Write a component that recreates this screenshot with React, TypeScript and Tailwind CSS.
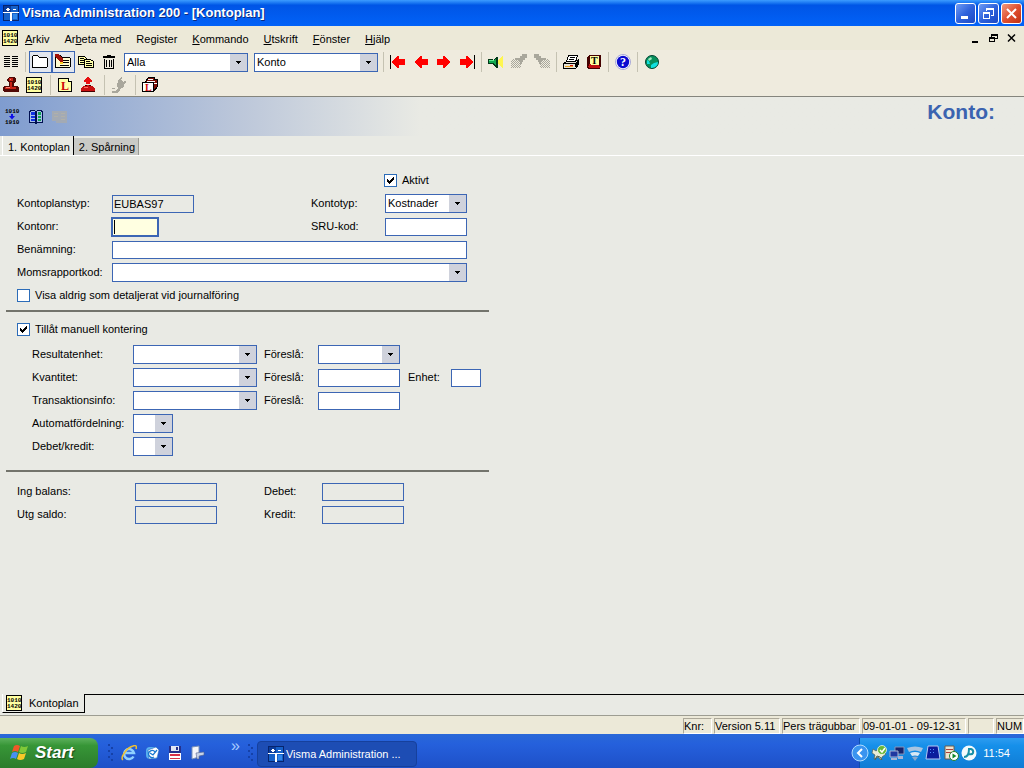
import { ReactNode } from 'react';
import clsx from 'clsx';

interface IFieldProps {
  id: string;
  label: string;
  className?: string;
}

interface ISelectBoxProps {
  id: string;
  label?: string;
  className?: string;
  options?: string[];
}

const Icon = ({ children, size = 16 }: { children: ReactNode; size?: number }) => (
  <svg width={size} height={size} viewBox="0 0 16 16" shapeRendering="crispEdges" className="shrink-0" aria-hidden>
    {children}
  </svg>
);

const VismaIcon = () => (
  <Icon>
    <rect width="16" height="16" fill="#06246e" />
    <rect x="1" y="1" width="14" height="14" fill="#1560c8" />
    <rect x="1" y="1" width="7" height="7" fill="#0a3c9c" />
    <path d="M0 7h16v1H0zM7 8h2v8H7zM3 4h4v1H3zM4 3h2v3H4zM10 4h3v1h-3z" fill="#fff" />
    <path d="M10 9h4v5h-4z" fill="#2f86ea" />
  </Icon>
);

const DigitsIcon = ({ bare }: { bare?: boolean }) => (
  <svg width="16" height="16" viewBox="0 0 16 16" className="shrink-0 overflow-visible" aria-hidden>
    {!bare && <rect x="0.5" y="0.5" width="15" height="15" fill="#ffffa0" stroke="#000" />}
    <g fontFamily="Liberation Mono" fontWeight="700" fontSize="6" fill="#000">
      <text x="1" y={bare ? 4 : 7}>
        1010
      </text>
      <text x="1" y={bare ? 15 : 13}>
        {bare ? '1910' : '1420'}
      </text>
    </g>
    {bare && <path d="M7 5h2v2h2L8 10.500 5 7h2z" fill="#1010e8" />}
  </svg>
);

const ListIcon = () => (
  <Icon>
    <path d="M1 2h6v1H1zM1 4h6v1H1zM1 6h6v1H1zM1 8h6v1H1zM1 10h6v1H1zM1 12h6v1H1zM9 2h6v1H9zM9 4h6v1H9zM9 6h6v1H9zM9 8h6v1H9zM9 10h6v1H9zM9 12h6v1H9z" />
  </Icon>
);

const FolderIcon = () => (
  <Icon>
    <path d="M.5 13.500v-11l1-1h4l2 2h7l1 1v8l-1 1z" fill="#fff" stroke="#000" />
  </Icon>
);

const FolderEditIcon = () => (
  <Icon>
    <path d="M.5 13.500v-11l1-1h4l2 2h7l1 1v8l-1 1z" fill="#fffbd0" stroke="#000" />
    <path d="M8 6h6v1H8zM8 8h6v1H8zM5 11h9v1H5z" />
    <path d="M0 0h3l5 5v3H5L0 3z" fill="#a01008" />
    <path d="M5 8h3v2H5z" fill="#ffcf20" />
  </Icon>
);

const CopyIcon = () => (
  <Icon>
    <path d="M.5 2.500h6l2 2v6h-8z" fill="#ffffa8" stroke="#000" />
    <path d="M2 4h4v1H2zM2 6h4v1H2zM2 8h4v1H2z" />
    <path d="M6.500 5.500h6l3 2v6h-9z" fill="#ffffa8" stroke="#000" />
    <path d="M8 7h4v1H8zM8 9h6v1H8zM8 11h6v1H8z" />
  </Icon>
);

const TrashIcon = () => (
  <Icon>
    <path d="M6 1h4v1H6zM2 2h12v2H2zM3 5h1v10H3zM12 5h1v10h-1zM4 14h8v1H4zM5 6h1v7H5zM7.500 6h1v7h-1zM10 6h1v7h-1z" />
  </Icon>
);

const ArrowIcon = ({ right, stop }: { right?: boolean; stop?: boolean }) => (
  <Icon>
    <g transform={right ? 'translate(16 0) scale(-1 1)' : undefined}>
      {stop && <rect x="0" y="1" width="1" height="14" />}
      <path d="M2 7h1V6h1V5h1V4h1V3h1V2h2v3h6v6H9v3H7v-1H6v-1H5v-1H4v-1H3V9H2z" fill="#f00" />
    </g>
  </Icon>
);

const SpeakerIcon = () => (
  <Icon>
    <path d="M9 7l6-6v14L9 9z" fill="#fff650" />
    <path d="M0 5h5v1h1V5h1V4h1V3h2v11H8v-1H7v-1H6v-1H5v-1H0z" fill="#023818" />
    <path d="M1 6h5v3H1zM6 6h1V5h1v6H7v-1H6z" fill="#10a850" />
    <path d="M1 6h5v1H1z" fill="#60e890" />
  </Icon>
);

const TorchIcon = ({ flip }: { flip?: boolean }) => (
  <Icon>
    <g transform={flip ? 'translate(16 0) scale(-1 1)' : undefined} fill="#a9a79c">
      <path d="M11 0h5v4h-2v2h-2v2h-1v2H9V8H8V7H7V6H4V4h5V2h2z" />
      <path d="M2 5h1v1H2zM4 5h1v1H4zM1 6h1v1H1zM3 6h1v1H3zM5 6h1v1H5zM0 7h1v1H0zM2 7h1v1H2zM4 7h1v1H4zM6 7h1v1H6zM1 8h1v1H1zM3 8h1v1H3zM5 8h1v1H5zM7 8h1v1H7zM0 9h1v1H0zM2 9h1v1H2zM4 9h1v1H4zM6 9h1v1H6zM8 9h1v1H8zM1 10h1v1H1zM3 10h1v1H3zM5 10h1v1H5zM7 10h1v1H7zM9 10h1v1H9zM0 11h1v1H0zM2 11h1v1H2zM4 11h1v1H4zM6 11h1v1H6zM8 11h1v1H8zM1 12h1v1H1zM3 12h1v1H3zM5 12h1v1H5zM7 12h1v1H7zM9 12h1v1H9zM0 13h1v1H0zM2 13h1v1H2zM4 13h1v1H4zM6 13h1v1H6zM8 13h1v1H8z" />
    </g>
  </Icon>
);

const PrinterIcon = () => (
  <Icon>
    <path d="M5.500 1.500h9l-2 6h-9z" fill="#fff" stroke="#000" />
    <path d="M7 3h5v1H7zM6 5h5v1H6z" />
    <path d="M.5 9.500l3-2h9l3-2v5l-3 4H.5z" fill="#e8e5d8" stroke="#000" />
    <path d="M1 9h11v1H1zM12 9l3-3v4l-3 3z" />
    <path d="M2 12h8v1H2z" fill="#e8a020" />
    <path d="M7 11h3v1H7z" fill="#d01010" />
  </Icon>
);

const KeyIcon = () => (
  <Icon>
    <path d="M3 1h11l1 1v10l-1 3H2l-1-2V3z" fill="#400" />
    <path d="M2 12h1v-2h10v2h1v1l-1 1H3l-1-1z" fill="#c01010" />
    <path d="M4 2h9v8l-1 1H5l-1-1z" fill="#ffffa0" />
    <text x="5" y="10" fontFamily="Liberation Serif" fontWeight="700" fontSize="10">
      T
    </text>
  </Icon>
);

const HelpIcon = () => (
  <svg width="16" height="16" viewBox="0 0 16 16" aria-hidden>
    <circle cx="8" cy="8" r="7.500" fill="#fff" stroke="#a8a8d8" strokeWidth="1" />
    <circle cx="8" cy="8" r="6.200" fill="#0b0bd0" />
    <text x="8" y="12" textAnchor="middle" fontFamily="Liberation Serif" fontWeight="700" fontSize="12" fill="#fff">
      ?
    </text>
  </svg>
);

const GlobeIcon = () => (
  <svg width="16" height="16" viewBox="0 0 16 16" aria-hidden>
    <circle cx="8" cy="8" r="6.500" fill="#08905c" stroke="#043" />
    <path d="M7 14l0-3 3-2 4-1q0 5-6 6zM3 6l2 1 1 3-3 0z" fill="#10e0e0" />
    <path d="M4 5l3-2 1 2-3 2z" fill="#9fe8c0" />
  </svg>
);

const StampIcon = () => (
  <Icon>
    <path d="M6 0h5l2 2v2l-2 2v3h4l1 2v3l-1 1H1l-1-1v-3l1-2h5V6L4 4V2z" fill="#500804" />
    <path d="M6 1h4v3H6zM7 5h2v5H7zM2 10h11v2H2z" fill="#c82014" />
    <path d="M7 2h1v1H7zM3 10h4v1H3z" fill="#ff8070" />
  </Icon>
);

const LetterPageIcon = () => (
  <Icon>
    <path d="M1.500 1.500h10l3 3v10h-13z" fill="#ffffa8" stroke="#000" />
    <path d="M11.500 1.500v3h3" fill="#fff" stroke="#000" />
    <text x="4" y="13" fontFamily="Liberation Serif" fontWeight="700" fontSize="12" fill="#d00808">
      L
    </text>
  </Icon>
);

const UploadIcon = () => (
  <Icon>
    <path d="M7 0h2v1h1v1h1v1h1v2h-2v2H6V5H4V3h1V2h1V1h1z" fill="#e81010" />
    <path d="M5 8h6v1h2v1h1v1h1v4H1v-4h1v-1h1V9h2z" fill="#c81010" />
    <path d="M1 14h14v1H1zM5 8h2v1H5zM9 8h2v1H9z" fill="#400" />
    <path d="M4 10h4v1H4z" fill="#ff7060" />
  </Icon>
);

const PlugIcon = () => (
  <Icon>
    <path d="M8 2l2-2 1 1-1 2 2 2 2-1 1 1-2 2v3l-3 1-1 2-2 3H1v-2h4l2-3-1-3z" fill="#a9a79c" />
    <path d="M1 11h3v1H1z" fill="#a9a79c" />
  </Icon>
);

const BinderIcon = () => (
  <Icon>
    <path d="M3.500 4.500l3-4h6v2h3v7l-4 5z" fill="#801008" stroke="#000" />
    <path d="M6 2h5v1H6zM5 4h8v1H5zM12 6h3v1h-3z" fill="#fff" />
    <path d="M.5 5.500h11v9H.5z" fill="#fff" stroke="#000" />
    <text x="3" y="14" fontFamily="Liberation Serif" fontWeight="700" fontSize="10" fill="#d00808">
      L
    </text>
  </Icon>
);

const BookIcon = () => (
  <Icon>
    <path d="M1.500 2.500l2-1h3l1.500 1 1.500-1h3l2 1v11h-5l-1.500 1-1.500-1h-5z" fill="#a8c0e8" stroke="#001050" />
    <path d="M3 3h4v3H3zM3 7h4v2H3zM3 10h4v2H3z" fill="#1030e0" />
    <path d="M10 3h3v3h-3zM10 7h3v2h-3zM10 10h3v2h-3z" fill="#10a050" />
    <path d="M7 2h2v12H7z" fill="#001050" />
  </Icon>
);

const FadedBookIcon = () => (
  <Icon>
    <path d="M0 2h15v12H4v-2H0z" fill="#a3aab4" />
    <path d="M2 4h4v1H2zM2 7h4v1H2zM9 4h4v1H9zM9 7h4v1H9zM9 10h4v1H9z" fill="#b0b0aa" />
  </Icon>
);

const Separator = ({ className }: { className?: string }) => (
  <span className={clsx('h-5 w-px shrink-0 bg-[#c5c2b2]', className)} />
);

const ToolButton = ({ title, active, children }: { title: string; active?: boolean; children: ReactNode }) => (
  <button
    type="button"
    aria-label={title}
    className={clsx(
      'flex h-[22px] w-[23px] shrink-0 items-center justify-center border pr-px',
      active ? 'border-[#3c66b4] bg-[#e2e6ee]' : 'border-transparent',
    )}
  >
    {children}
  </button>
);

const SelectBox = ({ id, label, className, options = [''] }: ISelectBoxProps) => (
  <span className={clsx('relative block h-[19px] border border-[#3c66b4] bg-white', className)}>
    <select id={id} aria-label={label} className="block h-full w-full appearance-none pr-4 pl-[2px] outline-none">
      {options.map((option) => (
        <option key={option}>{option}</option>
      ))}
    </select>
    <span className="pointer-events-none absolute inset-y-0 right-0 flex w-[17px] items-center justify-center bg-[#cfd2dc]">
      <svg width="5" height="3" shapeRendering="crispEdges" aria-hidden>
        <path d="M0 0h5v1H4v1H3v1H2V2H1V1H0z" />
      </svg>
    </span>
  </span>
);

const SelectField = ({ id, label, className, options }: IFieldProps & { options?: string[] }) => (
  <>
    <label htmlFor={id}>{label}</label>
    <SelectBox id={id} className={className} options={options} />
  </>
);

const TextField = ({ id, label, className, value, readOnly }: IFieldProps & { value?: string; readOnly?: boolean }) => (
  <>
    <label htmlFor={id}>{label}</label>
    <input
      id={id}
      type="text"
      defaultValue={value}
      readOnly={readOnly}
      className={clsx(
        'h-[18px] border border-[#3c66b4] px-px outline-none',
        readOnly ? 'bg-transparent' : 'bg-white',
        className,
      )}
    />
  </>
);

const CheckField = ({ label, checked, className }: { label: string; checked?: boolean; className?: string }) => (
  <label className={clsx('flex h-[23px] items-center gap-[5px]', className)}>
    <span className="relative block size-[13px]">
      <input
        type="checkbox"
        defaultChecked={checked}
        className="peer block size-[13px] appearance-none border border-[#2c6cb8] bg-white"
      />
      <svg
        width="13"
        height="13"
        className="pointer-events-none absolute inset-0 hidden peer-checked:block"
        shapeRendering="crispEdges"
        aria-hidden
      >
        <path d="M3 5h1v1h1v1h1V6h1V5h1V4h1V3h1v3H9v1H8v1H7v1H6v1H5V9H4V8H3z" />
      </svg>
    </span>
    {label}
  </label>
);

const CAPTION_BUTTON =
  'flex size-[21px] items-center justify-center rounded-[3px] border border-white bg-linear-to-br from-[#6f9bf4] via-[#2f62dc] to-[#1c48c4]';

const TitleBar = () => (
  <header className="flex h-[26px] items-center gap-[3px] bg-linear-to-b from-[#3c9cff] via-[#0055e6] via-20% to-[#0262f8] pr-[2px] pl-[3px]">
    <VismaIcon />
    <h1 className="flex-1 text-[13px] font-bold text-white [text-shadow:1px_1px_0_#0a2a80]">
      Visma Administration 200 - [Kontoplan]
    </h1>
    <div className="flex gap-[2px]">
      <button type="button" aria-label="Minimera" className={CAPTION_BUTTON}>
        <svg width="13" height="13">
          <rect x="2" y="9" width="7" height="3" fill="#fff" />
        </svg>
      </button>
      <button type="button" aria-label="Återställ" className={CAPTION_BUTTON}>
        <svg width="13" height="13" fill="none" stroke="#fff" shapeRendering="crispEdges">
          <path d="M1.500 5.500h6v6h-6zM1 6.500h7M4.500 4V1.500h7v7H9M4 2.500h8" />
        </svg>
      </button>
      <button
        type="button"
        aria-label="Stäng"
        className="flex size-[21px] items-center justify-center rounded-[3px] border border-white bg-linear-to-br from-[#f0987c] via-[#e05030] to-[#c03010]"
      >
        <svg width="13" height="13" stroke="#fff" strokeWidth="2">
          <path d="M2 2l9 9M11 2l-9 9" />
        </svg>
      </button>
    </div>
  </header>
);

const MENU = [
  ['', 'A', 'rkiv'],
  ['Ar', 'b', 'eta med'],
  ['Re', 'g', 'ister'],
  ['', 'K', 'ommando'],
  ['', 'U', 'tskrift'],
  ['', 'F', 'önster'],
  ['', 'H', 'jälp'],
];

const MenuBar = () => (
  <nav className="flex h-6 items-center bg-[#ece9d8] pr-2 pl-[2px] text-[11px]">
    <DigitsIcon />
    <div className="flex flex-1 gap-[15px] pt-[2px] pl-[7px]">
      {MENU.map(([before, key, after]) => (
        <button key={before + key + after} type="button" className="whitespace-pre">
          {before}
          <u>{key}</u>
          {after}
        </button>
      ))}
    </div>
    <div className="flex gap-[9px]">
      <button type="button" aria-label="Minimera fönster">
        <svg width="9" height="11">
          <rect x="1" y="8" width="6" height="2" />
        </svg>
      </button>
      <button type="button" aria-label="Återställ fönster">
        <svg width="9" height="11" fill="none" stroke="#000" shapeRendering="crispEdges">
          <path d="M.5 4.500h5v4h-5zM0 5.500h6M2.500 4V1.500h6v4H6M2 2.500h7" />
        </svg>
      </button>
      <button type="button" aria-label="Stäng fönster">
        <svg width="9" height="11" stroke="#000" strokeWidth="1.500">
          <path d="M1 1.500l7 7M8 1.500l-7 7" />
        </svg>
      </button>
    </div>
  </nav>
);

const Toolbars = () => (
  <div className="border-b border-[#85857d] bg-[#efebde] text-[11px]">
    <div className="flex h-6 items-center">
      <ToolButton title="Lista">
        <ListIcon />
      </ToolButton>
      <Separator className="mr-[3px] ml-[2px]" />
      <ToolButton title="Ny" active>
        <FolderIcon />
      </ToolButton>
      <ToolButton title="Ändra" active>
        <FolderEditIcon />
      </ToolButton>
      <ToolButton title="Kopiera">
        <CopyIcon />
      </ToolButton>
      <ToolButton title="Ta bort">
        <TrashIcon />
      </ToolButton>
      <SelectBox id="urval" label="Urval" className="ml-[3px] w-[124px]" options={['Alla']} />
      <SelectBox id="sortering" label="Sortering" className="mr-[3px] ml-[6px] w-[124px]" options={['Konto']} />
      <Separator className="mr-[3px] ml-[2px]" />
      <ToolButton title="Första">
        <ArrowIcon stop />
      </ToolButton>
      <ToolButton title="Föregående">
        <ArrowIcon />
      </ToolButton>
      <ToolButton title="Nästa">
        <ArrowIcon right />
      </ToolButton>
      <ToolButton title="Sista">
        <ArrowIcon right stop />
      </ToolButton>
      <Separator className="mr-[3px] ml-[2px]" />
      <ToolButton title="Ljud">
        <SpeakerIcon />
      </ToolButton>
      <ToolButton title="Sök">
        <TorchIcon />
      </ToolButton>
      <ToolButton title="Sök nästa">
        <TorchIcon flip />
      </ToolButton>
      <Separator className="mr-[3px] ml-[2px]" />
      <ToolButton title="Skriv ut">
        <PrinterIcon />
      </ToolButton>
      <ToolButton title="Text">
        <KeyIcon />
      </ToolButton>
      <Separator className="mr-[3px] ml-[2px]" />
      <ToolButton title="Hjälp">
        <HelpIcon />
      </ToolButton>
      <Separator className="mr-[3px] ml-[2px]" />
      <ToolButton title="Internet">
        <GlobeIcon />
      </ToolButton>
    </div>
    <div className="flex h-[22px] items-center">
      <ToolButton title="Verifikation">
        <StampIcon />
      </ToolButton>
      <ToolButton title="Kontoplan">
        <DigitsIcon />
      </ToolButton>
      <Separator className="mr-[3px] ml-1" />
      <ToolButton title="Leverantör">
        <LetterPageIcon />
      </ToolButton>
      <ToolButton title="Betalning">
        <UploadIcon />
      </ToolButton>
      <Separator className="mr-[3px] ml-1" />
      <ToolButton title="Anslut">
        <PlugIcon />
      </ToolButton>
      <Separator className="mr-[3px] ml-1" />
      <ToolButton title="Register">
        <BinderIcon />
      </ToolButton>
    </div>
  </div>
);

const AccountHeader = () => (
  <div className="flex h-[39px] bg-linear-to-r from-[#7f9ccf] via-[#bcc7da] via-[240px] to-[#e9eae4] to-[420px] pr-[29px]">
    <div className="flex flex-1 items-center gap-px pl-px">
      <ToolButton title="Konton">
        <DigitsIcon bare />
      </ToolButton>
      <ToolButton title="Huvudbok">
        <BookIcon />
      </ToolButton>
      <ToolButton title="Dagbok">
        <FadedBookIcon />
      </ToolButton>
    </div>
    <h2 className="pt-[2px] text-[21px] leading-[26px] font-bold text-[#3b63b0]">Konto:</h2>
  </div>
);

const AccountForm = () => (
  <form className="flex-1 text-[11px] leading-[13px]">
    <div className="flex items-end border-b border-white pl-[2px]">
      <button type="button" className="h-[19px] border-r border-l border-l-white border-r-black pt-[3px] pr-[3px] pl-[5px]">
        1. Kontoplan
      </button>
      <button type="button" className="h-[17px] border-r border-[#9a9a94] bg-[#c9cac6] pt-px pr-[3px] pl-[5px]">
        2. Spårning
      </button>
    </div>

    <div className="ml-[6px] w-[483px] pt-[13px]">
      <section className="border-b-2 border-[#73746c] pb-[3px] pl-[11px]">
        <div className="grid auto-rows-[23px] grid-cols-[95px_199px_74px_82px] items-center">
          <CheckField label="Aktivt" checked className="col-start-4 -ml-px" />
          <TextField id="kontoplanstyp" label="Kontoplanstyp:" value="EUBAS97" readOnly className="w-[82px]" />
          <SelectField id="kontotyp" label="Kontotyp:" options={['Kostnader']} />
          <label htmlFor="kontonr">Kontonr:</label>
          <span className="relative -ml-px block h-5 w-12 border-2 border-[#3c66b4] bg-[#ffffe1]">
            <input id="kontonr" type="text" className="block h-full w-full outline-none" />
            <span className="pointer-events-none absolute top-px bottom-px left-px w-px bg-black" />
          </span>
          <TextField id="sru" label="SRU-kod:" />
          <TextField id="benamning" label="Benämning:" className="col-span-3" />
          <SelectField id="moms" label="Momsrapportkod:" className="col-span-3" />
        </div>
        <CheckField label="Visa aldrig som detaljerat vid journalföring" />
      </section>

      <section className="border-b-2 border-[#73746c] pt-[6px] pb-3 pl-[11px]">
        <CheckField label="Tillåt manuell kontering" checked />
        <div className="mt-[2px] grid auto-rows-[23px] grid-cols-[101px_131px_54px_90px_43px_30px] items-center pl-[15px]">
          <SelectField id="resultatenhet" label="Resultatenhet:" className="w-[124px]" />
          <SelectField id="foresla-resultat" label="Föreslå:" className="w-[82px]" />
          <span className="col-span-2" />
          <SelectField id="kvantitet" label="Kvantitet:" className="w-[124px]" />
          <TextField id="foresla-kvantitet" label="Föreslå:" className="w-[82px]" />
          <TextField id="enhet" label="Enhet:" className="w-[30px]" />
          <SelectField id="transaktionsinfo" label="Transaktionsinfo:" className="w-[124px]" />
          <TextField id="foresla-transaktion" label="Föreslå:" className="w-[82px]" />
          <span className="col-span-2" />
          <SelectField id="automatfordelning" label="Automatfördelning:" className="w-10" />
          <span className="col-span-4" />
          <SelectField id="debet-kredit" label="Debet/kredit:" className="w-10" />
        </div>
      </section>

      <section className="grid auto-rows-[23px] grid-cols-[118px_129px_58px_82px] items-center pt-2 pl-[11px]">
        <TextField id="ing-balans" label="Ing balans:" readOnly className="w-[82px]" />
        <TextField id="debet" label="Debet:" readOnly className="w-[82px]" />
        <TextField id="utg-saldo" label="Utg saldo:" readOnly className="w-[82px]" />
        <TextField id="kredit" label="Kredit:" readOnly className="w-[82px]" />
      </section>
    </div>
  </form>
);

const WindowTabs = () => (
  <div className="flex h-[22px] items-start border-b border-[#9d9d92] text-[11px]">
    <button
      type="button"
      className="ml-[2px] flex h-[19px] items-center gap-[7px] border-r border-b border-l border-black border-l-white pr-[5px] pl-[3px]"
    >
      <DigitsIcon />
      Kontoplan
    </button>
    <span className="flex-1 border-t border-black" />
  </div>
);

const StatusCell = ({ className, children }: { className?: string; children?: ReactNode }) => (
  <span
    className={clsx(
      'h-4 shrink-0 border border-t-[#aca899] border-r-white border-b-white border-l-[#aca899] whitespace-nowrap',
      className,
    )}
  >
    {children}
  </span>
);

const StatusBar = () => (
  <footer className="flex h-[18px] items-end justify-end gap-[2px] bg-[#ece9d8] text-[11px] leading-[15px]">
    <StatusCell className="w-[29px]">Knr:</StatusCell>
    <StatusCell className="w-[66px]">Version 5.11</StatusCell>
    <StatusCell className="w-[78px]">Pers trägubbar</StatusCell>
    <StatusCell className="w-[104px]">09-01-01 - 09-12-31</StatusCell>
    <StatusCell className="w-[26px]" />
    <StatusCell className="w-7">NUM</StatusCell>
  </footer>
);

const Grip = () => (
  <svg width="5" height="20" fill="#1541a8" aria-hidden className="shrink-0">
    <path d="M0 1h2v2H0zM3 4h2v2H3zM0 7h2v2H0zM3 10h2v2H3zM0 13h2v2H0zM3 16h2v2H3z" />
  </svg>
);

const QuickLaunch = () => (
  <div className="flex gap-[7px]">
    <a href="#internet" aria-label="Internet Explorer">
      <svg width="16" height="16" viewBox="0 0 16 16" fill="none">
        <path d="M12.500 11.500A5 5 0 1 1 13 8H4.500" stroke="#8fd0ff" strokeWidth="2.500" />
        <path d="M2 15C-1 13 5 3 12 1c3-1 4 0 3 3" stroke="#f0c030" strokeWidth="1.500" />
      </svg>
    </a>
    <a href="#mail" aria-label="Outlook Express">
      <svg width="16" height="16" viewBox="0 0 16 16">
        <rect x="2" y="2" width="12" height="12" rx="4" fill="#58b0f0" />
        <path d="M4 5l8-3 3 3-2 8-8 1z" fill="#fff" stroke="#1860b8" strokeWidth=".6" />
        <path d="M11 7a3.500 3.500 0 1 0-1 5M6 8l3 2 4-5" fill="none" stroke="#1878d0" strokeWidth="1.300" />
      </svg>
    </a>
    <a href="#spara" aria-label="Spara">
      <svg width="16" height="16" viewBox="0 0 16 16" shapeRendering="crispEdges">
        <path d="M2 1h11l1 1v13H2z" fill="#24308c" />
        <path d="M4 1h8v5H4z" fill="#e0e6f4" />
        <path d="M9 2h2v3H9z" fill="#24308c" />
        <path d="M2 8h12v7H2z" fill="#fff" />
        <path d="M3 9h10v2H3zM3 13h10v1H3z" fill="#d83048" />
      </svg>
    </a>
    <a href="#skrivbord" aria-label="Visa skrivbordet">
      <svg width="16" height="16" viewBox="0 0 16 16">
        <path d="M2 2l7-1v11l-7 2z" fill="#f4f6fa" stroke="#7890b8" />
        <path d="M6 8l8-1v3l-5 1v3H7z" fill="#c8d4e8" stroke="#50608c" strokeWidth=".6" />
      </svg>
    </a>
  </div>
);

const TrayIcons = () => (
  <div className="flex items-center gap-[2px]">
    <svg width="16" height="16" viewBox="0 0 16 16" aria-hidden>
      <path d="M2 4l3 2 4-3 2 4 4 2-4 3-1 3-3-3-4 2 1-4-3-2z" fill="#e8ecd8" stroke="#506050" strokeWidth=".7" />
      <path d="M4 15l2-4 3 1 2 3" fill="none" stroke="#506050" />
      <circle cx="11" cy="5" r="4.500" fill="#68b838" stroke="#fff" strokeWidth=".7" />
      <path d="M9 5l2 2 3-4" fill="none" stroke="#fff" strokeWidth="1.500" />
    </svg>
    <svg width="16" height="16" viewBox="0 0 16 16" aria-hidden>
      <path d="M6 2h9v7H6z" fill="#16246c" stroke="#8494bc" />
      <path d="M1 6h8v6H1z" fill="#2038a0" stroke="#a8b4d4" />
      <path d="M9 11h5v3H9zM2 13h6v2H2z" fill="#a8b4d4" />
    </svg>
    <svg width="16" height="16" viewBox="0 0 16 16" aria-hidden>
      <path d="M0 3q8-3 16 0l-2 4q-6-3-12 0z" fill="#a8c4e0" />
      <path d="M3 8q5-2 10 0l-2 3q-3-1-6 0z" fill="#d8e8f4" />
      <path d="M5 12q3-1 6 0l-3 4z" fill="#88a8cc" />
    </svg>
    <svg width="16" height="16" viewBox="0 0 16 16" aria-hidden>
      <path d="M3 1h10l2 13H1z" fill="#0a1c9c" stroke="#b4c8f4" />
      <path d="M5 4h1v1H5zM8 4h1v1H8zM5 7h1v1H5zM8 7h1v1H8z" fill="#4c8cff" />
    </svg>
    <svg width="16" height="16" viewBox="0 0 16 16" aria-hidden>
      <path d="M2 1h9v13H2z" fill="#ece4d0" stroke="#685c50" />
      <path d="M3 4h7v1H3zM3 7h7v1H3z" fill="#b04038" />
      <circle cx="11" cy="11" r="4.500" fill="#fff" stroke="#208030" />
      <path d="M9.500 8.500l4 2.500-4 2.500z" fill="#108828" />
    </svg>
    <svg width="16" height="16" viewBox="0 0 16 16" aria-hidden>
      <circle cx="8" cy="8" r="7.500" fill="#f4fafc" />
      <path d="M3 12q5 0 5-8h2q3 1 2 4-1 2-4 1" fill="none" stroke="#1890a8" strokeWidth="2" />
    </svg>
  </div>
);

const Taskbar = () => (
  <footer className="flex h-[34px] items-stretch bg-linear-to-b from-[#2a68d8] via-[#2560dc] via-30% to-[#1e50c8] text-[11px] text-white">
    <button
      type="button"
      className="mt-1 flex w-[98px] items-center gap-[5px] rounded-r-lg bg-linear-to-b from-[#5cb05c] via-[#379637] via-25% to-[#2c7c2c] pl-[10px]"
    >
      <svg width="20" height="20" viewBox="0 0 20 20" aria-hidden>
        <path d="M4 3q3-2 6 0L8 9q-3-2-6 0z" fill="#f05828" />
        <path d="M11 3q3 2 7 0l-2 6q-4 2-7 0z" fill="#80c838" />
        <path d="M2 10q3-2 6 0l-2 6q-3-2-6 0z" fill="#4890f0" />
        <path d="M9 10q3 2 7 0l-2 6q-4 2-7 0z" fill="#f8c828" />
      </svg>
      <span className="text-[17px] leading-5 font-bold italic [text-shadow:1px_1px_1px_#14481a]">Start</span>
    </button>
    <div className="mt-1 flex items-center pl-[10px]">
      <Grip />
      <div className="w-2" />
      <QuickLaunch />
      <span className="self-start pr-[8px] pl-[25px] text-base leading-4 text-[#a8ccff]">»</span>
      <Grip />
    </div>
    <button
      type="button"
      className="mt-[7px] mb-px ml-1 flex w-40 items-center gap-[2px] rounded-sm border border-[#16409c] bg-[#1d4db4] pl-[10px]"
    >
      <VismaIcon />
      <span className="whitespace-nowrap">Visma Administration ...</span>
    </button>
    <div className="mt-1 ml-auto flex items-center gap-[2px] border-l border-[#0c4cb0] bg-linear-to-b from-[#2c9cf0] via-[#1690ea] via-25% to-[#107cd4] pr-[14px]">
      <button type="button" aria-label="Visa dolda ikoner" className="-ml-[9px]">
        <svg width="18" height="18" viewBox="0 0 18 18">
          <circle cx="9" cy="9" r="8" fill="#3a94f0" stroke="#b0dcff" />
          <path d="M11 5L7 9l4 4" fill="none" stroke="#fff" strokeWidth="2" />
        </svg>
      </button>
      <TrayIcons />
      <time className="pl-1">11:54</time>
    </div>
  </footer>
);

export default function App() {
  return (
    <div className="flex min-h-screen flex-col bg-[#e9eae4] text-black font-['Liberation_Sans',Arial,sans-serif]">
      <TitleBar />
      <MenuBar />
      <Toolbars />
      <AccountHeader />
      <AccountForm />
      <WindowTabs />
      <StatusBar />
      <Taskbar />
    </div>
  );
}
